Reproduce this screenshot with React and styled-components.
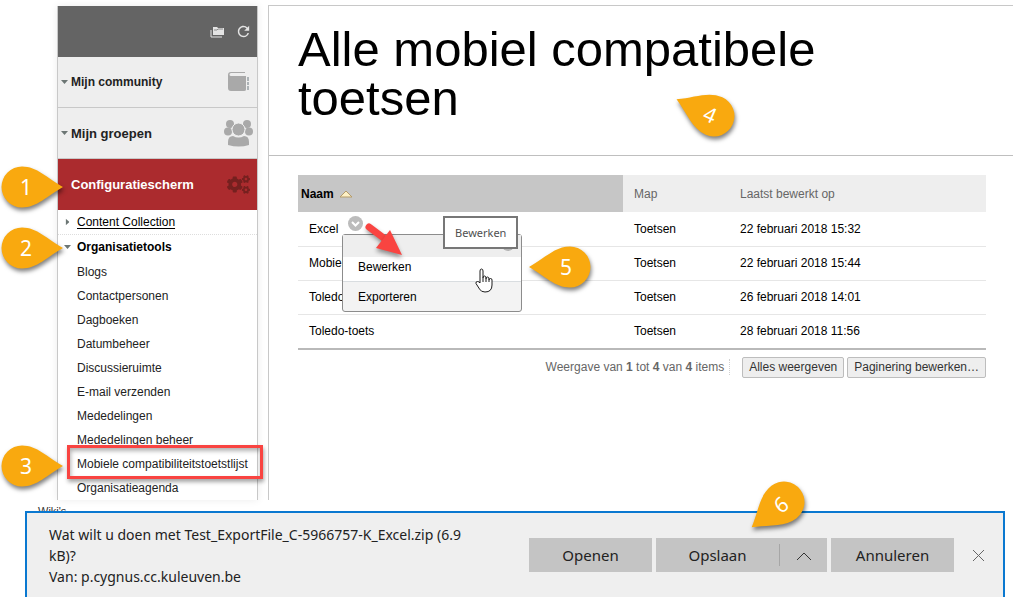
import React from 'react';
import styled, { createGlobalStyle } from 'styled-components';
import { FaCogs } from 'react-icons/fa';
import { MdRefresh } from 'react-icons/md';

const colors = {
    text: '#222222',
    muted: '#666666',
    line: '#c8c8c8',
    panel: '#eeeeee',
    sorted: '#c6c6c6',
    header: '#646464',
    active: '#ab2b2e',
    callout: '#f9a90f',
    marker: '#f94441',
    accent: '#0a78d0',
};

const arial = '"Liberation Sans", Arial, sans-serif';
const segoe = '"Noto Sans", "Open Sans", sans-serif';

const GlobalStyle = createGlobalStyle`
    * {
        box-sizing: border-box;
    }

    body {
        margin: 0;
        background: white;
        color: black;
        font-family: ${arial};
        font-size: 12px;
    }

    button {
        font: inherit;
        color: inherit;
        cursor: pointer;
    }

    h1, ul, p {
        margin: 0;
        padding: 0;
    }

    ul {
        list-style: none;
    }
`;

const Page = styled.div`
    padding-top: 5px;
    overflow: hidden;
`;

const Columns = styled.div`
    display: flex;
    gap: 10px;
    padding-left: 57px;
`;

/* Sidebar */

const Sidebar = styled.nav`
    flex: 0 0 201px;
    margin-top: 1px;
    border: 1px solid ${colors.line};
    border-width: 0 1px;
    box-shadow: 0 0 8px rgba(0, 0, 0, 0.08);
`;

const SidebarTop = styled.div`
    display: flex;
    align-items: center;
    justify-content: flex-end;
    gap: 10px;
    height: 51px;
    padding-right: 5px;
    background: ${colors.header};
    color: #e4e4e4;
`;

const IconButton = styled.button`
    display: flex;
    padding: 0;
    border: 0;
    background: none;
`;

const Section = styled.div`
    position: relative;
    height: 51px;
    border-bottom: 1px solid ${({ $active }) => ($active ? colors.active : colors.line)};
    background: ${({ $active }) => ($active ? colors.active : colors.panel)};
    color: ${({ $active }) => ($active ? 'white' : colors.text)};
`;

const SectionButton = styled.button`
    display: flex;
    align-items: center;
    gap: 3px;
    width: 100%;
    height: 100%;
    padding: 0 4px 0 3px;
    border: 0;
    background: none;
    font-size: ${({ $small }) => ($small ? '12px' : '13px')};
    font-weight: bold;
    text-align: left;
`;

const SectionLabel = styled.span`
    flex: 1;
`;

const SectionIcon = styled.span`
    display: flex;
    justify-content: center;
    width: 29px;
`;

const Caret = styled.i`
    flex: 0 0 7px;
    height: 4px;
    background: ${({ $hidden }) => ($hidden ? 'none' : '#6c7674')};
    clip-path: polygon(0 0, 100% 0, 50% 100%);
    transform: ${({ $closed }) => ($closed ? 'rotate(-90deg)' : 'none')};
`;

const TreeRow = styled.div`
    position: relative;
    display: flex;
    align-items: center;
    gap: 6px;
    height: 25px;
    padding-left: 6px;
    border-bottom: 1px dotted ${({ $line }) => ($line ? '#dddddd' : 'transparent')};

    a {
        color: black;
        text-underline-offset: 2px;
    }

    button {
        padding: 0;
        border: 0;
        background: none;
        font-weight: bold;
    }
`;

const ToolItem = styled.li`
    position: relative;
    padding-left: 19px;
    line-height: 24px;
    white-space: nowrap;

    a {
        color: ${colors.text};
        text-decoration: none;
    }
`;

const Highlight = styled.span`
    position: absolute;
    z-index: 1;
    top: -7px;
    left: 9px;
    right: -6px;
    height: 34px;
    border: 3px solid ${colors.marker};
    box-shadow: 1px 3px 4px rgba(0, 0, 0, 0.35), inset 1px 3px 4px rgba(0, 0, 0, 0.3);
    pointer-events: none;
`;

/* Content */

const Main = styled.main`
    flex: 1;
    min-width: 0;
    border: 1px solid ${colors.line};
    border-width: 1px 0 0 1px;
`;

const TitleBar = styled.header`
    position: relative;
    padding: 19px 29px 32px;
    border-bottom: 1px solid #bfbfbf;

    h1 {
        max-width: 90%;
        font-size: 49px;
        font-weight: normal;
        line-height: 49px;
    }
`;

const Content = styled.section`
    padding: 19px 27px 0 29px;
`;

const Table = styled.table`
    width: 100%;
    border-collapse: collapse;
    table-layout: fixed;
    border-bottom: 2px solid #b9b9b9;

    th, td {
        padding: 0 11px;
        text-align: left;
    }

    th {
        height: 37px;
        background: ${colors.panel};
        color: ${colors.muted};
        font-weight: normal;
    }

    th:first-child {
        width: 325px;
        padding-left: 3px;
        background: ${colors.sorted};
        color: black;
    }

    th:nth-child(2) {
        width: 106px;
    }

    td {
        height: 34px;
        border-bottom: 1px solid #e6e6e6;
    }
`;

const SortButton = styled.button`
    display: flex;
    align-items: center;
    gap: 5px;
    padding: 0;
    border: 0;
    background: none;
    font-weight: bold;
`;

const NameCell = styled.div`
    position: relative;
    display: flex;
    align-items: center;
    gap: 10px;
    height: 33px;
`;

const MenuToggle = styled(IconButton)`
    padding-bottom: 11px;
`;

const ContextMenu = styled.div`
    position: absolute;
    z-index: 2;
    top: 22px;
    left: 33px;
    width: 180px;
    border: 1px solid #8c8c8c;
    border-radius: 3px;
    background: #f3f3f3;
`;

const MenuHeader = styled.div`
    display: flex;
    justify-content: flex-end;
    height: 22px;
    padding: 4px 5px 0 0;
    background: ${colors.panel};
`;

const MenuItem = styled.button`
    display: block;
    width: 100%;
    height: ${({ $hover }) => ($hover ? '25px' : '29px')};
    padding: 0 0 ${({ $hover }) => ($hover ? '5px' : '0')} 15px;
    border: 0;
    border-bottom: ${({ $hover }) => ($hover ? '1px solid #d9dde0' : '0')};
    background: ${({ $hover }) => ($hover ? 'white' : 'none')};
    text-align: left;
`;

const Tooltip = styled.div`
    position: absolute;
    z-index: 3;
    top: -19px;
    left: 100px;
    padding: 0 10px;
    border: 2px solid #777777;
    background: white;
    color: #505050;
    font-family: ${segoe};
    font-size: 11px;
    line-height: 29px;
`;

const Overlay = styled.svg`
    position: absolute;
    z-index: 4;
    top: ${({ $top }) => $top}px;
    left: ${({ $left }) => $left}px;
    overflow: visible;
    pointer-events: none;
`;

const Pager = styled.div`
    display: flex;
    align-items: center;
    justify-content: flex-end;
    gap: 3px;
    padding-top: 7px;
    color: ${colors.muted};

    p {
        margin-right: 9px;
        padding-right: 5px;
        border-right: 1px dotted #d0d0d0;
        line-height: 16px;
    }
`;

const PagerButton = styled.button`
    height: 21px;
    padding: 0 6px;
    border: 1px solid #bdbdbd;
    border-radius: 2px;
    background: ${colors.panel};
    color: #333333;
`;

/* Download bar */

const Peek = styled.div`
    height: 11px;
    padding: 5px 0 0 38px;
    overflow: hidden;
    color: #333333;
    font-size: 11px;
    line-height: 13px;
`;

const DownloadBar = styled.aside`
    position: relative;
    display: flex;
    align-items: flex-start;
    gap: 4px;
    margin: 0 8px 0 25px;
    padding: 11px 18px 10px 22px;
    border: 2px solid ${colors.accent};
    border-bottom: 0;
    background: #efefef;
    font-family: ${segoe};
    color: #222222;
`;

const DownloadText = styled.div`
    flex: 1;
    font-size: 14px;
    line-height: 21px;

    p {
        max-width: 440px;
    }
`;

const BarButton = styled.button`
    flex: 0 0 auto;
    width: 123px;
    height: 34px;
    padding: 0;
    border: 0;
    background: #c4c4c4;
    font-size: 15px;
`;

const SplitButton = styled.div`
    display: flex;
    align-items: center;
    background: #c4c4c4;
`;

const SplitArrow = styled(BarButton)`
    width: 48px;
    height: 22px;
    border-left: 1px solid #a6a6a6;
`;

const BarActions = styled.div`
    display: flex;
    align-items: center;
    gap: 4px;
    padding-top: 14px;
`;

const CloseButton = styled(IconButton)`
    margin-left: 14px;
`;

const tools = [
    'Blogs',
    'Contactpersonen',
    'Dagboeken',
    'Datumbeheer',
    'Discussieruimte',
    'E-mail verzenden',
    'Mededelingen',
    'Mededelingen beheer',
    'Mobiele compatibiliteitstoetstlijst',
    'Organisatieagenda',
];

const tests = [
    { name: 'Excel', folder: 'Toetsen', edited: '22 februari 2018 15:32', open: true },
    { name: 'Mobiele', folder: 'Toetsen', edited: '22 februari 2018 15:44' },
    { name: 'Toledo', folder: 'Toetsen', edited: '26 februari 2018 14:01' },
    { name: 'Toledo-toets', folder: 'Toetsen', edited: '28 februari 2018 11:56' },
];

// Teardrop with its round end centred at 22,22; the digit sits a little towards the tip
const Callout = ({ number, top, left, angle = 0, tilt = 0 }) => {
    const rad = (angle * Math.PI) / 180;
    const x = 22 + 4 * Math.cos(rad);
    const y = 22 + 4 * Math.sin(rad);

    return (
        <Overlay width="44" height="44" $top={top} $left={left}>
            <g style={{ filter: 'drop-shadow(1px 3px 2px rgba(0, 0, 0, 0.5))' }}>
                <path
                    d="M63 22C47 13 37 1.500 22 1.500A20.500 20.500 0 0 0 22 42.500C37 42.500 47 31 63 22Z"
                    fill={colors.callout}
                    transform={`rotate(${angle} 22 22)`}
                />
            </g>
            <text
                x={x}
                y={y + 8}
                fill="white"
                fontFamily={segoe}
                fontSize="21"
                textAnchor="middle"
                transform={`rotate(${tilt} ${x} ${y})`}
            >
                {number}
            </text>
        </Overlay>
    );
};

const FolderIcon = () => (
    <svg width="15" height="12" viewBox="0 0 15 12">
        <path d="M3 1h4l1 1h6v7H3z" fill="currentColor" />
        <path d="M1 4v7h11" fill="none" stroke="currentColor" />
        <path d="M4 4h3l1-1h5" fill="none" stroke="#8b8b8b" />
    </svg>
);

const BookIcon = () => (
    <svg width="21" height="20" viewBox="0 0 21 20">
        <path d="M3 0h14v1H3q-1.500 0-1.500 1.500T3 4h15v13.500q0 1.500-2 1.500H3q-3 0-3-3V3q0-3 3-3z" fill="#a9a9a9" />
        <path d="M19 5h2v4h-2zM19 10h2v3h-2zM19 14h2v4h-2z" fill="#adb3b6" />
    </svg>
);

const GroupIcon = () => (
    <svg width="29" height="28" viewBox="0 0 29 28" fill="#a9a9a9">
        <circle cx="6" cy="5" r="4" />
        <circle cx="23" cy="5" r="4" />
        <circle cx="4" cy="12.500" r="4" />
        <circle cx="25" cy="12.500" r="4" />
        <circle cx="14.500" cy="10.500" r="6.500" stroke={colors.panel} />
        <path d="M4 26v-3q0-6 5-6 5.500 3 11 0 5 0 5 6v3q-10 3-21 0z" />
    </svg>
);

const ChevronCircle = () => (
    <svg width="15" height="15" viewBox="0 0 15 15">
        <circle cx="7.500" cy="7.500" r="7.500" fill="#bcbcbc" />
        <path d="M4 6l3.500 3.500L11 6" fill="none" stroke="white" strokeWidth="2" />
    </svg>
);

const SortIcon = () => (
    <svg width="14" height="8" viewBox="0 0 14 8">
        <path d="M1 7l6-6 6 6z" fill="#fdf0c4" stroke="#b49b6b" />
    </svg>
);

const RowMenu = () => (
    <ContextMenu role="menu">
        <MenuHeader>
            <svg width="15" height="14" viewBox="0 0 15 14">
                <circle cx="7" cy="6" r="6" fill="#b4b4b4" />
                <path d="M5 4l4 4m0-4l-4 4" stroke="white" />
            </svg>
        </MenuHeader>
        <MenuItem role="menuitem" $hover>Bewerken</MenuItem>
        <MenuItem role="menuitem">Exporteren</MenuItem>
        <Tooltip role="tooltip">Bewerken</Tooltip>
        <Overlay width="44" height="40" $top={-13} $left={22}>
            <path
                d="M4 5L20 17"
                stroke={colors.marker}
                strokeWidth="7"
                strokeLinecap="round"
                style={{ filter: 'drop-shadow(1px 3px 2px rgba(0, 0, 0, 0.4))' }}
            />
            <path
                d="M25 8L37 33 11 26z"
                fill={colors.marker}
                style={{ filter: 'drop-shadow(0 3px 2px rgba(0, 0, 0, 0.4))' }}
            />
        </Overlay>
        <Overlay width="18" height="25" viewBox="0 0 18 25" $top={33} $left={132}>
            <path
                d="M5 15V3q0-2 1.500-2T8 3v7q0-2 1.500-2t1.500 2v1q0-2 1.500-2t1.500 2v1q0-1.500 1.500-1.500T17 12v5q0 7-7 7-4 0-5.500-3L1 15.500q-.5-2 1.500-2Q4 13.500 5 15z"
                fill="white"
                stroke="#1d1d1d"
            />
            <path d="M8 10v4M11 11v3M14 12v2" stroke="#1d1d1d" />
        </Overlay>
        <Callout number="5" top={10} left={205} angle={180} />
    </ContextMenu>
);

const App = () => {
    return (
        <Page>
            <GlobalStyle />
            <Columns>
                <Sidebar>
                    <SidebarTop>
                        <IconButton aria-label="Mappen"><FolderIcon /></IconButton>
                        <IconButton aria-label="Vernieuwen"><MdRefresh size={17} /></IconButton>
                    </SidebarTop>
                    <Section>
                        <SectionButton $small>
                            <Caret />
                            <SectionLabel>Mijn community</SectionLabel>
                            <SectionIcon><BookIcon /></SectionIcon>
                        </SectionButton>
                    </Section>
                    <Section>
                        <SectionButton>
                            <Caret />
                            <SectionLabel>Mijn groepen</SectionLabel>
                            <SectionIcon><GroupIcon /></SectionIcon>
                        </SectionButton>
                    </Section>
                    <Section $active>
                        <SectionButton>
                            <Caret $hidden />
                            <SectionLabel>Configuratiescherm</SectionLabel>
                            <SectionIcon><FaCogs size={23} color="#75201f" /></SectionIcon>
                        </SectionButton>
                        <Callout number="1" top={6} left={-58} />
                    </Section>
                    <TreeRow $line>
                        <Caret $closed />
                        <a href="#content">Content Collection</a>
                    </TreeRow>
                    <TreeRow>
                        <Caret />
                        <button>Organisatietools</button>
                        <Callout number="2" top={-9} left={-58} />
                    </TreeRow>
                    <ul>
                        {tools.map((tool) => (
                            <ToolItem key={tool}>
                                <a href="#tool">{tool}</a>
                                {tool.startsWith('Mobiele') && (
                                    <>
                                        <Highlight />
                                        <Callout number="3" top={-8} left={-58} />
                                    </>
                                )}
                            </ToolItem>
                        ))}
                    </ul>
                </Sidebar>

                <Main>
                    <TitleBar>
                        <h1>Alle mobiel compatibele toetsen</h1>
                        <Callout number="4" top={88} left={423} angle={204} tilt={24} />
                    </TitleBar>
                    <Content>
                        <Table>
                            <thead>
                                <tr>
                                    <th><SortButton>Naam <SortIcon /></SortButton></th>
                                    <th>Map</th>
                                    <th>Laatst bewerkt op</th>
                                </tr>
                            </thead>
                            <tbody>
                                {tests.map((test) => (
                                    <tr key={test.name}>
                                        <td>
                                            <NameCell>
                                                {test.name}
                                                {test.open && (
                                                    <>
                                                        <MenuToggle aria-label="Opties"><ChevronCircle /></MenuToggle>
                                                        <RowMenu />
                                                    </>
                                                )}
                                            </NameCell>
                                        </td>
                                        <td>{test.folder}</td>
                                        <td>{test.edited}</td>
                                    </tr>
                                ))}
                            </tbody>
                        </Table>
                        <Pager>
                            <p>Weergave van <b>1</b> tot <b>4</b> van <b>4</b> items</p>
                            <PagerButton>Alles weergeven</PagerButton>
                            <PagerButton>Paginering bewerken…</PagerButton>
                        </Pager>
                    </Content>
                </Main>
            </Columns>

            <Peek>Wiki's</Peek>
            <DownloadBar>
                <DownloadText>
                    <p>Wat wilt u doen met Test_ExportFile_C-5966757-K_Excel.zip (6.9 kB)?</p>
                    <p>Van: p.cygnus.cc.kuleuven.be</p>
                </DownloadText>
                <BarActions>
                    <BarButton>Openen</BarButton>
                    <SplitButton>
                        <BarButton>Opslaan</BarButton>
                        <SplitArrow aria-label="Meer opties">
                            <svg width="16" height="10" viewBox="0 0 16 10">
                                <path d="M1 9l7-7 7 7" fill="none" stroke="#333333" />
                            </svg>
                        </SplitArrow>
                    </SplitButton>
                    <BarButton>Annuleren</BarButton>
                    <CloseButton aria-label="Sluiten">
                        <svg width="13" height="13" viewBox="0 0 13 13">
                            <path d="M1 1l11 11M12 1L1 12" stroke="#666666" />
                        </svg>
                    </CloseButton>
                </BarActions>
                <Callout number="6" top={-33} left={735} angle={142} tilt={-38} />
            </DownloadBar>
        </Page>
    );
};

export default App;
